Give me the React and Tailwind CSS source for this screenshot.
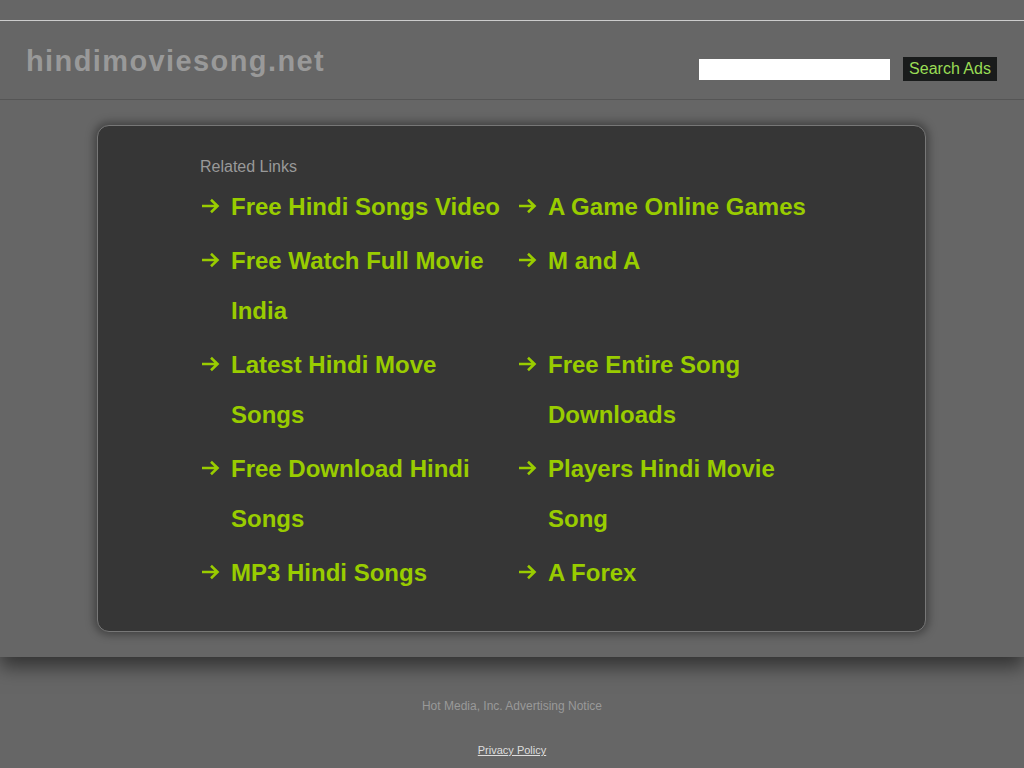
const links = [
  ['Free Hindi Songs Video', 'A Game Online Games'],
  ['Free Watch Full Movie India', 'M and A'],
  ['Latest Hindi Move Songs', 'Free Entire Song Downloads'],
  ['Free Download Hindi Songs', 'Players Hindi Movie Song'],
  ['MP3 Hindi Songs', 'A Forex'],
];

function Arrow() {
  return (
    <svg width="19" height="16" viewBox="0 0 19 16" className="block">
      <path d="M1 8h15.5M10 1.8L16.5 8 10 14.2" fill="none" stroke="#99cc00" strokeWidth="2.6" />
    </svg>
  );
}

function LinkItem({ label }) {
  return (
    <div className="flex w-[317px]">
      <span className="w-[31px] h-[50px] flex items-center pl-[1px] pb-[2px]">
        <Arrow />
      </span>
      <a href="#" className="w-[276px] text-[24px] leading-[50px] font-bold text-[#99cc00]">
        {label}
      </a>
    </div>
  );
}

export default function App() {
  return (
    <div className="min-h-[768px] bg-[#666666] font-['Liberation_Sans',Arial,sans-serif]">
      <div className="shadow-[0_10px_18px_rgba(0,0,0,0.5)] relative">
        <div className="h-[21px] border-b border-[#cccccc]" />
        <header className="h-[79px] border-b border-[#555555] flex items-start justify-between">
          <h1 className="ml-[26px] mt-[22px] text-[29px] tracking-[1.4px] font-bold text-[#999999] leading-[36px]">
            hindimoviesong.net
          </h1>
          <form className="flex items-center mt-[36px] mr-[27px]">
            <input type="text" className="w-[191px] h-[21px] bg-white border-0 outline-none" />
            <button
              type="button"
              className="ml-[13px] w-[94px] h-[24px] bg-[#191b1b] text-[#99dd55] text-[16px] leading-[24px]"
            >
              Search Ads
            </button>
          </form>
        </header>
        <main className="pt-[25px] pb-[25px]">
          <div className="mx-[97px] w-[829px] h-[507px] rounded-[12px] border border-[#777777] bg-[#363636] shadow-[0_0_8px_3px_rgba(0,0,0,0.35)] pl-[102px] pt-[31px]">
            <p className="text-[16px] leading-[20px] text-[#999999]">Related Links</p>
            <div className="mt-[5px] flex flex-col gap-[4px]">
              {links.map((row, i) => (
                <div key={i} className="flex items-start">
                  <LinkItem label={row[0]} />
                  <LinkItem label={row[1]} />
                </div>
              ))}
            </div>
          </div>
        </main>
      </div>
      <footer className="flex flex-col items-center pt-[41px]">
        <p className="text-[12px] leading-[16px] text-[#999999]">Hot Media, Inc. Advertising Notice</p>
        <a href="#" className="mt-[29px] text-[11px] leading-[14px] text-[#dddddd] underline">
          Privacy Policy
        </a>
      </footer>
    </div>
  );
}
